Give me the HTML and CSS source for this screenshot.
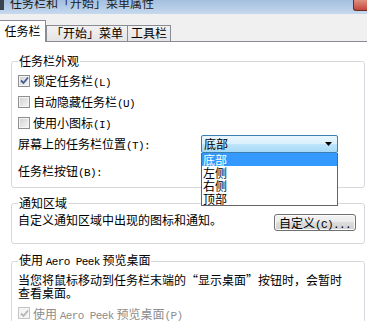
FILE: index.html
```html
<!DOCTYPE html>
<html lang="zh-CN">
<head>
  <meta charset="UTF-8" />
  <title>任务栏和「开始」菜单属性</title>
  <link rel="stylesheet" href="styles.css">
</head>
<body>
  <div class="titlebar">
    <span class="app-icon"></span>
    <span class="title">任务栏和「开始」菜单属性</span>
    <span class="close"></span>
  </div>

  <div class="tabs">
    <div class="tab active">任务栏</div>
    <div class="tab tab-start">「开始」菜单</div>
    <div class="tab tab-tools">工具栏</div>
  </div>

  <div class="page">
    <fieldset class="group group-look">
      <legend>任务栏外观</legend>
      <div class="check-row">
        <span class="box">
          <svg width="9" height="9" viewBox="0 0 9 9"><path d="M1 4.5 L3.5 7 L8 1.5" fill="none" stroke="#3d5a99" stroke-width="1.8"/></svg>
        </span>
        <span>锁定任务栏<span class="en">(L)</span></span>
      </div>
      <div class="check-row"><span class="box"></span><span>自动隐藏任务栏<span class="en">(U)</span></span></div>
      <div class="check-row"><span class="box"></span><span>使用小图标<span class="en">(I)</span></span></div>

      <div class="field-row">
        <span>屏幕上的任务栏位置<span class="en">(T):</span></span>
        <div class="combo">
          <span class="combo-value">底部</span>
          <svg class="combo-arrow" width="7" height="4" viewBox="0 0 7 4"><path d="M0 0 H7 L3.5 4 Z" fill="#000"/></svg>
          <ul class="dropdown">
            <li class="selected">底部</li>
            <li>左侧</li>
            <li>右侧</li>
            <li>顶部</li>
          </ul>
        </div>
      </div>
      <div class="field-row second">
        <span>任务栏按钮<span class="en">(B):</span></span>
      </div>
    </fieldset>

    <fieldset class="group group-tray">
      <legend>通知区域</legend>
      <div class="tray-row">
        <span class="tray-text">自定义通知区域中出现的图标和通知。</span>
        <button class="btn">自定义<span class="en">(C)...</span></button>
      </div>
    </fieldset>

    <fieldset class="group group-peek">
      <legend>使用 <span class="en">Aero Peek</span> 预览桌面</legend>
      <p class="peek-text">当您将鼠标移动到任务栏末端的“显示桌面”按钮时，会暂时<br>查看桌面。</p>
      <div class="check-row disabled">
        <span class="box">
          <svg width="9" height="9" viewBox="0 0 9 9"><path d="M1 4.5 L3.5 7 L8 1.5" fill="none" stroke="#b4b4b4" stroke-width="1.8"/></svg>
        </span>
        <span>使用 <span class="en">Aero Peek</span> 预览桌面<span class="en">(P)</span></span>
      </div>
    </fieldset>
  </div>
</body>
</html>
```

FILE: styles.css
```css
html, body {
  margin: 0;
  padding: 0;
}
body {
  width: 367px;
  height: 321px;
  overflow: hidden;
  background: #fff;
  color: #000;
  font-family: "Noto Sans CJK SC", "Noto Sans", sans-serif;
  font-size: 12px;
}
.en {
  font-family: "Liberation Mono", monospace;
  font-size: 11px;
  letter-spacing: -0.6px;
}

/* title bar */
.titlebar {
  height: 14px;
  display: flex;
  align-items: flex-start;
  overflow: hidden;
  background: linear-gradient(#a3bfdf, #c6d9ee);
}
.app-icon {
  width: 4px;
  height: 10px;
  background: #3a4250;
}
.title {
  margin: -4px 0 0 6px;
  line-height: 14px;
  font-size: 12px;
  color: #1a1a1a;
}
.close {
  margin-left: auto;
  width: 13px;
  height: 10px;
  background: linear-gradient(#e0907f, #c2473a);
  border-left: 1px solid #6d2c26;
  border-bottom: 1px solid #6d2c26;
  border-bottom-left-radius: 3px;
}

/* tabs */
.tabs {
  height: 27px;
  display: flex;
  align-items: flex-end;
  background: #f0f0f0;
  border-bottom: 1px solid #898c95;
}
.tab {
  box-sizing: border-box;
  height: 16px;
  border: 1px solid #898c95;
  border-bottom: none;
  background: linear-gradient(#f2f2f2, #e4e4e4);
  line-height: 14px;
  text-align: center;
}
.tab.active {
  width: 46px;
  height: 22px;
  margin-bottom: -1px;
  border-left: none;
  background: #fff;
  line-height: 20px;
  position: relative;
}
.tab-start {
  width: 82px;
}
.tab-tools {
  width: 44px;
  margin-left: -1px;
}

/* group boxes */
.group {
  margin: 0 2px 0 11px;
  padding: 2px 8px 6px 6px;
  min-width: 0;
  border: 1px solid #d5d9dd;
  border-radius: 3px;
}
.group legend {
  padding: 0 1px;
  line-height: 14px;
}
.group-look {
  margin-top: 12px;
}
.group-tray {
  margin-top: 8px;
  padding-bottom: 12px;
}
.group-peek {
  margin-top: 9px;
}

.check-row {
  height: 21px;
  display: flex;
  align-items: center;
}
.check-row.disabled {
  color: #8d8d8d;
  height: 20px;
  margin-top: 4px;
}
.box {
  box-sizing: border-box;
  width: 12px;
  height: 12px;
  margin-right: 3px;
  border: 1px solid #8e8f8f;
  background: linear-gradient(135deg, #cfcfcf, #f7f7f7);
  box-shadow: inset 0 0 0 1px #f4f4f4;
  display: flex;
  align-items: center;
  justify-content: center;
}
.disabled .box {
  border-color: #c4c4c4;
  background: #f4f4f4;
}

.field-row {
  height: 21px;
  display: grid;
  grid-template-columns: 183px 137px;
  align-items: center;
}
.field-row.second {
  margin-top: 6px;
}

.combo {
  position: relative;
  box-sizing: border-box;
  height: 18px;
  border: 1px solid #3c7fb1;
  border-radius: 2px;
  background: linear-gradient(#eaf6fd, #d9f0fc 50%, #bee6fd 50%, #a7d9f5);
  display: flex;
  align-items: center;
  padding: 0 0 0 2px;
}
.combo-value {
  line-height: 16px;
}
.combo-arrow {
  margin-left: auto;
  margin-right: 5px;
}
.dropdown {
  position: absolute;
  top: 17px;
  left: -1px;
  width: 137px;
  box-sizing: border-box;
  margin: 0;
  padding: 0;
  list-style: none;
  background: #fff;
  border: 1px solid #646464;
  border-top: none;
  z-index: 2;
}
.dropdown li {
  height: 13px;
  line-height: 13px;
  padding-left: 1px;
}
.dropdown li.selected {
  background: #3399ff;
  color: #fff;
}

.tray-row {
  display: flex;
  align-items: flex-start;
  justify-content: space-between;
}
.tray-text {
  line-height: 16px;
}
.btn {
  box-sizing: border-box;
  width: 82px;
  height: 17px;
  margin-top: 2px;
  padding: 0;
  border: 1px solid #707070;
  border-radius: 3px;
  background: linear-gradient(#f2f2f2, #ebebeb 50%, #dddddd 50%, #cfcfcf);
  box-shadow: inset 0 0 0 1px #fcfcfc;
  font-family: "Noto Sans CJK SC", "Noto Sans", sans-serif;
  font-size: 12px;
  line-height: 15px;
  color: #000;
}

.peek-text {
  margin: 2px 0 0;
  line-height: 13px;
}
```
